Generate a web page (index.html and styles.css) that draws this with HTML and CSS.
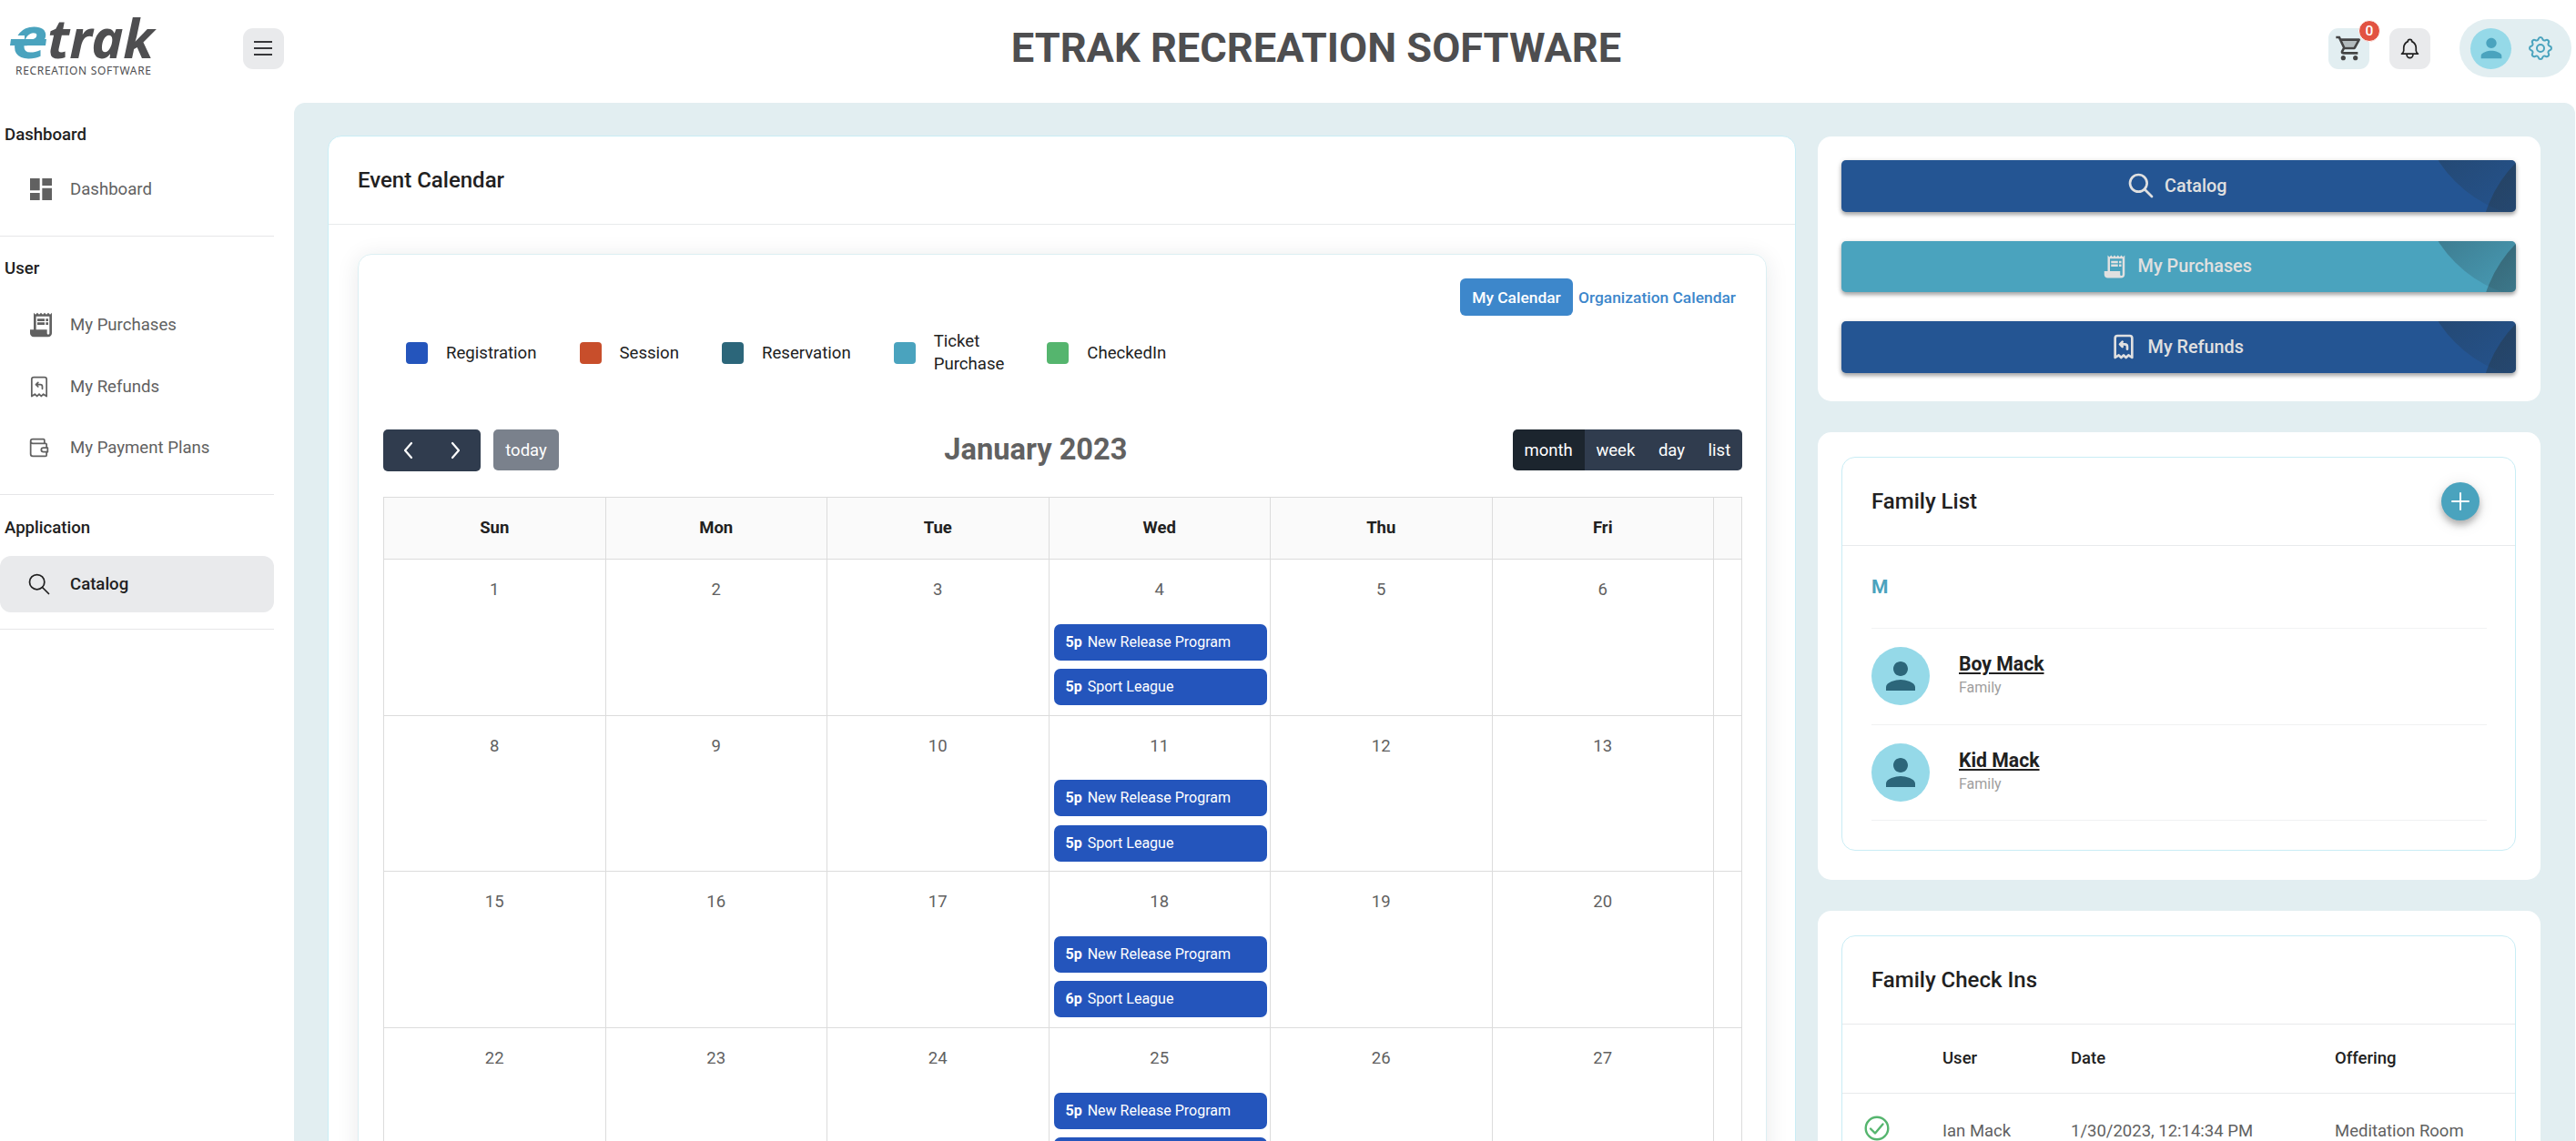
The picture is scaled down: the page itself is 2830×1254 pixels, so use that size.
FILE: index.html
```html
<!DOCTYPE html>
<html lang="en">
<head>
    <meta charset="UTF-8">
    <meta name="viewport" content="width=device-width, initial-scale=1.0">
    <title>eTrak Recreation Software</title>
    <link rel="stylesheet" href="styles.css">
</head>
<body>
    <!-- Shared icons -->
    <svg class="sprite" xmlns="http://www.w3.org/2000/svg">
        <symbol id="i-search" viewBox="0 0 24 24"><circle cx="10" cy="10" r="7"/><path d="M21 21l-6-6"/></symbol>
        <symbol id="i-receipt" viewBox="0 0 24 24"><path d="M19.5 3.5L18 2l-1.5 1.5L15 2l-1.5 1.5L12 2l-1.5 1.5L9 2 7.5 3.5 6 2v14H3v3c0 1.66 1.34 3 3 3h12c1.66 0 3-1.34 3-3V2l-1.5 1.5zM19 19c0 .55-.45 1-1 1s-1-.45-1-1v-3H8V5h11v14zM9 7h6v2H9zM16 7h2v2h-2zM9 10h6v2H9zM16 10h2v2h-2z"/></symbol>
        <symbol id="i-refund" viewBox="0 0 24 24"><path d="M5 21v-16a2 2 0 0 1 2-2h10a2 2 0 0 1 2 2v16l-3-2-2 2-2-2-2 2-2-2-3 2"/><path d="M15 14v-2a2 2 0 0 0-2-2h-4l2-2m0 4l-2-2"/></symbol>
        <symbol id="i-person" viewBox="0 0 24 24"><path d="M12 12c2.21 0 4-1.79 4-4s-1.79-4-4-4-4 1.79-4 4 1.79 4 4 4zm0 2c-2.67 0-8 1.34-8 4v2h16v-2c0-2.66-5.33-4-8-4z"/></symbol>
    </svg>

    <header class="header">
        <div class="header-left">
            <svg class="logo" width="170" height="70" viewBox="0 0 170 70">
                <text class="logo-e" x="3" y="46" textLength="39" lengthAdjust="spacingAndGlyphs">e</text>
                <path class="logo-gap" d="M0 21h17v4H0zM20 32h24v4H19z"/>
                <path class="logo-bar" d="M2 25h39l-1 7H1z"/>
                <text class="logo-trak" x="42" y="46" textLength="117" lengthAdjust="spacingAndGlyphs">trak</text>
                <text class="logo-sub" x="7" y="64" textLength="149">RECREATION SOFTWARE</text>
            </svg>
            <button class="icon-btn menu">
                <svg class="line" width="26" height="26" viewBox="0 0 26 26"><path d="M3 6h20M3 13h20M3 20h20"/></svg>
            </button>
        </div>
        <h1>ETRAK RECREATION SOFTWARE</h1>
        <div class="header-right">
            <button class="icon-btn cart">
                <svg width="32" height="32" viewBox="0 0 24 24"><path opacity=".3" d="M15.55 11l2.76-5H6.16l2.37 5z"/><path d="M15.55 13c.75 0 1.41-.41 1.75-1.03l3.58-6.49c.37-.66-.11-1.48-.87-1.48H5.21l-.94-2H1v2h2l3.6 7.59-1.35 2.44C4.52 15.37 5.48 17 7 17h12v-2H7l1.1-2h7.45zM6.16 6h12.15l-2.76 5H8.53L6.16 6zM7 18c-1.1 0-1.99.9-1.99 2S5.9 22 7 22s2-.9 2-2-.9-2-2-2zm10 0c-1.1 0-1.99.9-1.99 2s.89 2 1.99 2 2-.9 2-2-.9-2-2-2z"/></svg>
                <span class="badge">0</span>
            </button>
            <button class="icon-btn bell">
                <svg class="line" width="27" height="27" viewBox="0 0 24 24"><path d="M10 5a2 2 0 0 1 4 0a7 7 0 0 1 4 6v3a4 4 0 0 0 2 3h-16a4 4 0 0 0 2-3v-3a7 7 0 0 1 4-6M9 17v1a3 3 0 0 0 6 0v-1"/></svg>
            </button>
            <div class="profile">
                <span class="profile-avatar"><svg width="34" height="34"><use href="#i-person"/></svg></span>
                <svg class="line gear" width="32" height="32" viewBox="0 0 24 24"><path d="M10.325 4.317c.426-1.756 2.924-1.756 3.35 0a1.724 1.724 0 0 0 2.573 1.066c1.543-.94 3.31.826 2.37 2.37a1.724 1.724 0 0 0 1.065 2.572c1.756.426 1.756 2.924 0 3.35a1.724 1.724 0 0 0-1.066 2.573c.94 1.543-.826 3.31-2.37 2.37a1.724 1.724 0 0 0-2.572 1.065c-.426 1.756-2.924 1.756-3.35 0a1.724 1.724 0 0 0-2.573-1.066c-1.543.94-3.31-.826-2.37-2.37a1.724 1.724 0 0 0-1.065-2.572c-1.756-.426-1.756-2.924 0-3.35a1.724 1.724 0 0 0 1.066-2.573c-.94-1.543.826-3.31 2.37-2.37c1 .608 2.296.07 2.572-1.065z"/><circle cx="12" cy="12" r="3"/></svg>
            </div>
        </div>
    </header>

    <div class="layout">
        <nav class="sidebar">
            <div class="nav-group">
                <h2>Dashboard</h2>
                <a class="nav-item"><svg width="32" height="32" viewBox="0 0 24 24"><path d="M3 13h8V3H3v10zm0 8h8v-6H3v6zm10 0h8V11h-8v10zm0-18v6h8V3h-8z"/></svg>Dashboard</a>
            </div>
            <div class="nav-group">
                <h2>User</h2>
                <a class="nav-item"><svg width="32" height="32"><use href="#i-receipt"/></svg>My Purchases</a>
                <a class="nav-item"><svg class="line" width="28" height="28"><use href="#i-refund"/></svg>My Refunds</a>
                <a class="nav-item"><svg class="line" width="28" height="28" viewBox="0 0 24 24"><path d="M17 8v-3a1 1 0 0 0-1-1h-10a2 2 0 0 0 0 4h12a1 1 0 0 1 1 1v3m0 4v3a1 1 0 0 1-1 1h-12a2 2 0 0 1-2-2v-12"/><path d="M20 12v4h-4a2 2 0 0 1 0-4h4"/></svg>My Payment Plans</a>
            </div>
            <div class="nav-group">
                <h2>Application</h2>
                <a class="nav-item active"><svg class="line" width="28" height="28"><use href="#i-search"/></svg>Catalog</a>
            </div>
        </nav>

        <main class="main">
            <section class="card event-card">
                <h3 class="card-title">Event Calendar</h3>
                <div class="calendar-box">
                    <div class="tabs">
                        <button class="tab selected">My Calendar</button>
                        <button class="tab">Organization Calendar</button>
                    </div>
                    <ul class="legend">
                        <li><i class="registration"></i>Registration</li>
                        <li><i class="session"></i>Session</li>
                        <li><i class="reservation"></i>Reservation</li>
                        <li><i class="ticket"></i><span>Ticket<br>Purchase</span></li>
                        <li><i class="checkedin"></i>CheckedIn</li>
                    </ul>
                    <div class="toolbar">
                        <div class="toolbar-side">
                            <div class="btn-group arrows">
                                <button><svg class="line" width="12" height="20" viewBox="0 0 12 20"><path d="M10 2L3 10l7 8"/></svg></button>
                                <button><svg class="line" width="12" height="20" viewBox="0 0 12 20"><path d="M2 2l7 8-7 8"/></svg></button>
                            </div>
                            <button class="today">today</button>
                        </div>
                        <h2>January 2023</h2>
                        <div class="toolbar-side">
                            <div class="btn-group views">
                                <button class="on">month</button>
                                <button>week</button>
                                <button>day</button>
                                <button>list</button>
                            </div>
                        </div>
                    </div>
                    <div class="calendar">
                        <div class="week head">
                            <div>Sun</div><div>Mon</div><div>Tue</div><div>Wed</div><div>Thu</div><div>Fri</div><div></div>
                        </div>
                        <div class="week">
                            <div class="day">1</div>
                            <div class="day">2</div>
                            <div class="day">3</div>
                            <div class="day">4
                                <a class="event"><b>5p</b>New Release Program</a>
                                <a class="event"><b>5p</b>Sport League</a>
                            </div>
                            <div class="day">5</div>
                            <div class="day">6</div>
                            <div class="day"></div>
                        </div>
                        <div class="week">
                            <div class="day">8</div>
                            <div class="day">9</div>
                            <div class="day">10</div>
                            <div class="day">11
                                <a class="event"><b>5p</b>New Release Program</a>
                                <a class="event"><b>5p</b>Sport League</a>
                            </div>
                            <div class="day">12</div>
                            <div class="day">13</div>
                            <div class="day"></div>
                        </div>
                        <div class="week">
                            <div class="day">15</div>
                            <div class="day">16</div>
                            <div class="day">17</div>
                            <div class="day">18
                                <a class="event"><b>5p</b>New Release Program</a>
                                <a class="event"><b>6p</b>Sport League</a>
                            </div>
                            <div class="day">19</div>
                            <div class="day">20</div>
                            <div class="day"></div>
                        </div>
                        <div class="week">
                            <div class="day">22</div>
                            <div class="day">23</div>
                            <div class="day">24</div>
                            <div class="day">25
                                <a class="event"><b>5p</b>New Release Program</a>
                                <a class="event"></a>
                            </div>
                            <div class="day">26</div>
                            <div class="day">27</div>
                            <div class="day"></div>
                        </div>
                    </div>
                </div>
            </section>

            <div class="side">
                <section class="card actions">
                    <button class="action"><svg class="line" width="32" height="32"><use href="#i-search"/></svg>Catalog</button>
                    <button class="action teal"><svg width="30" height="30"><use href="#i-receipt"/></svg>My Purchases</button>
                    <button class="action"><svg class="line" width="32" height="32"><use href="#i-refund"/></svg>My Refunds</button>
                </section>

                <section class="card">
                    <div class="panel">
                        <div class="panel-head">
                            <h3>Family List</h3>
                            <button class="add"><svg class="line" width="22" height="22" viewBox="0 0 22 22"><path d="M11 2v18M2 11h18"/></svg></button>
                        </div>
                        <div class="family">
                            <div class="letter">M</div>
                            <div class="member">
                                <span class="avatar"><svg width="48" height="48"><use href="#i-person"/></svg></span>
                                <div>
                                    <a class="name">Boy Mack</a>
                                    <div class="role">Family</div>
                                </div>
                            </div>
                            <div class="member">
                                <span class="avatar"><svg width="48" height="48"><use href="#i-person"/></svg></span>
                                <div>
                                    <a class="name">Kid Mack</a>
                                    <div class="role">Family</div>
                                </div>
                            </div>
                        </div>
                    </div>
                </section>

                <section class="card">
                    <div class="panel">
                        <div class="panel-head">
                            <h3>Family Check Ins</h3>
                        </div>
                        <div class="checkin head">
                            <span></span><span>User</span><span>Date</span><span>Offering</span>
                        </div>
                        <div class="checkin">
                            <svg class="line check" width="28" height="28" viewBox="0 0 28 28"><circle cx="14" cy="14" r="12.3"/><path d="M7 14.5l5 5L20.5 9.5"/></svg>
                            <span>Ian Mack</span><span>1/30/2023, 12:14:34 PM</span><span>Meditation Room</span>
                        </div>
                    </div>
                </section>
            </div>
        </main>
    </div>
</body>
</html>
```

FILE: styles.css
```css
* {
    box-sizing: border-box;
}
body {
    margin: 0;
    height: 1254px;
    overflow: hidden;
    background: #fff;
    color: #212121;
    font-family: Roboto, "Liberation Sans", sans-serif;
    font-size: 18.5px;
}
h1, h2, h3, ul {
    margin: 0;
    padding: 0;
}
button {
    border: none;
    padding: 0;
    font-family: inherit;
    font-size: inherit;
    color: inherit;
    cursor: pointer;
}
svg {
    display: block;
    fill: currentColor;
    flex: none;
}
.line {
    fill: none;
    stroke: currentColor;
    stroke-width: 1.5;
    stroke-linecap: round;
    stroke-linejoin: round;
}
.sprite {
    display: none;
}

/* Header */
.header {
    height: 113px;
    padding: 0 5px 7px 10px;
    display: grid;
    grid-template-columns: 400px 1fr 400px;
    align-items: center;
}
.header-left {
    display: flex;
    align-items: center;
}
.logo {
    width: 170px;
    margin-right: 87px;
    overflow: visible;
}
.logo-e {
    font: italic bold 62px "Noto Sans", sans-serif;
    fill: #4aa3be;
}
.logo-bar {
    fill: #4aa3be;
}
.logo-gap {
    fill: #fff;
}
.logo-trak {
    font: italic bold 59px "Noto Sans", sans-serif;
    fill: #4e4e50;
}
.logo-sub {
    font: 12px "Noto Sans", sans-serif;
    fill: #4e4e50;
}
.icon-btn {
    width: 45px;
    height: 45px;
    border-radius: 11px;
    background: #e9eaec;
    color: #37373a;
    display: flex;
    align-items: center;
    justify-content: center;
}
.menu {
    padding-right: 1px;
}
.menu svg {
    stroke-width: 2;
    stroke-linecap: butt;
}
.header h1 {
    font-size: 45.2px;
    line-height: 54px;
    color: #4e4e50;
    text-align: center;
    margin-left: 57px;
}
.header-right {
    display: flex;
    align-items: center;
    justify-content: flex-end;
}
.cart {
    position: relative;
    background: #e2eef1;
    color: #444;
    margin-right: 22px;
}
.badge {
    position: absolute;
    top: -9px;
    right: -12px;
    width: 24px;
    height: 24px;
    border-radius: 50%;
    border: 1px solid #fff;
    background: #e25241;
    color: #fff;
    font-size: 15.5px;
    font-weight: 500;
    line-height: 22px;
}
.bell {
    color: #212121;
    margin-right: 32px;
}
.profile {
    width: 123px;
    height: 64px;
    border-radius: 32px;
    background: #e2eef1;
    display: flex;
    align-items: center;
    padding-left: 12px;
    gap: 16px;
    color: #4aa3be;
}
.profile-avatar {
    width: 45px;
    height: 45px;
    border-radius: 50%;
    background: #95d9e8;
    display: flex;
    align-items: center;
    justify-content: center;
}

/* Sidebar */
.layout {
    display: flex;
    height: 1141px;
    overflow: hidden;
    padding-right: 1px;
}
.sidebar {
    width: 323px;
    flex: none;
}
.nav-group {
    width: 301px;
    border-bottom: 1px solid #e6e6e8;
    padding: 20px 0;
}
.nav-group:first-child h2 {
    margin-bottom: 14px;
}
.nav-group:last-child {
    padding-top: 21px;
    padding-bottom: 18px;
}
.nav-group h2 {
    font-size: 18.6px;
    font-weight: 500;
    line-height: 30px;
    padding-left: 5px;
    margin-bottom: 16px;
}
.nav-item {
    display: flex;
    align-items: center;
    height: 62px;
    margin-bottom: 5.5px;
    padding-left: 29px;
    color: #616161;
    font-size: 18.6px;
}
.nav-item:last-child {
    margin-bottom: 0;
}
.nav-item svg {
    margin-right: 16px;
}
.nav-item .line {
    margin-right: 20px;
}
.nav-item.active {
    background: #e9eaec;
    border-radius: 12px;
    color: #212121;
    font-weight: 500;
    padding-bottom: 1px;
}

/* Main area */
.main {
    flex: 1;
    height: 1141px;
    background: #e2eef1;
    border-radius: 12px 12px 0 0;
    padding: 36px 38px 0 37px;
    display: flex;
    align-items: flex-start;
    gap: 24px;
}
.card {
    background: #fff;
    border-radius: 15px;
}
.event-card {
    width: 1613px;
    height: 1300px;
    border: 1px solid #c9edf5;
}
.card-title {
    height: 97px;
    padding: 0 32px;
    line-height: 96px;
    font-size: 24px;
    font-weight: 500;
    border-bottom: 1px solid #e8eaec;
}
.calendar-box {
    margin: 32px 31px 32px 32px;
    height: 1200px;
    border: 1px solid #dceff3;
    border-radius: 15px;
    padding: 26px 26px 0 27px;
    box-shadow: 0 3px 24px rgba(32, 40, 45, 0.1);
}
.tabs {
    display: flex;
    justify-content: flex-end;
    padding-right: 1px;
}
.tab {
    height: 41px;
    padding: 0 6px;
    background: none;
    color: #3d87cb;
    font-size: 17.4px;
    font-weight: 500;
}
.tab.selected {
    width: 124px;
    background: #3d87cb;
    color: #fff;
    border-radius: 6px;
}
.legend {
    list-style: none;
    display: flex;
    gap: 47px;
    height: 82px;
    padding-left: 25px;
    font-size: 18.6px;
    line-height: 25px;
}
.legend li {
    display: flex;
    align-items: center;
    gap: 20px;
}
.legend i {
    width: 24px;
    height: 24px;
    border-radius: 4px;
}
.registration { background: #2455bc; }
.session { background: #c84e2b; }
.reservation { background: #2c667a; }
.ticket { background: #4aa3be; }
.checkedin { background: #55b56e; }
.toolbar {
    display: flex;
    align-items: flex-start;
    justify-content: space-between;
    margin-top: 43px;
    margin-bottom: 28px;
    height: 46px;
}
.toolbar h2 {
    font-size: 32.6px;
    line-height: 44px;
    font-weight: 700;
    color: #616161;
}
.toolbar-side {
    display: flex;
    gap: 14px;
}
.btn-group {
    display: flex;
    border-radius: 5px;
    overflow: hidden;
}
.btn-group button {
    height: 45px;
    background: #303c4e;
    color: #fff;
    font-size: 18.5px;
    padding: 0 12.8px;
}
.btn-group button.on {
    background: #1c252e;
}
.btn-group.arrows button {
    width: 53.5px;
    height: 46px;
    padding: 0;
    display: flex;
    align-items: center;
    justify-content: center;
}
.arrows svg {
    stroke-width: 2.2;
}
.today {
    width: 72px;
    height: 45px;
    border-radius: 5px;
    background: #7a818c;
    color: #fff;
}
.calendar {
    border: 1px solid #dcdcdc;
    overflow: hidden;
}
.week {
    display: grid;
    grid-template-columns: repeat(7, 243.5px);
    height: 171.7px;
}
.week > div {
    border-right: 1px solid #dcdcdc;
    border-bottom: 1px solid #dcdcdc;
    text-align: center;
}
.week.head {
    height: 68px;
    background: #fafafa;
    font-weight: 700;
    line-height: 66px;
}
.day {
    padding: 20px 3px 0;
    line-height: 27px;
    color: #616161;
}
.event {
    display: flex;
    gap: 6px;
    height: 40px;
    margin-top: 9.5px;
    margin-left: 2px;
    padding-left: 13px;
    border-radius: 7px;
    background: #2455bc;
    color: #fff;
    font-size: 16px;
    line-height: 39px;
}
.event:first-child {
    margin-top: 23.5px;
}

/* Right column */
.side {
    width: 794px;
    flex: none;
    padding-top: 1px;
    display: flex;
    flex-direction: column;
    gap: 34px;
}
.side .card {
    padding: 27px 27px 32px 26px;
}
.side .actions {
    height: 291px;
    padding-top: 26px;
    display: flex;
    flex-direction: column;
    gap: 32px;
}
.action {
    position: relative;
    overflow: hidden;
    height: 56.5px;
    flex: none;
    border-radius: 5px;
    background: #245593;
    color: #e0e0e0;
    font-size: 19.8px;
    font-weight: 500;
    display: flex;
    align-items: center;
    justify-content: center;
    gap: 10.5px;
    box-shadow: 0 3px 4px rgba(0, 0, 0, 0.3), 0 1px 6px rgba(0, 0, 0, 0.12);
}
.action svg {
    margin-left: -5px;
    stroke-width: 2;
}
.action.teal {
    background: #4aa3be;
}
/* overlapping circles in the right corner */
.action::before,
.action::after {
    content: "";
    position: absolute;
    width: 276px;
    height: 276px;
    border-radius: 50%;
}
.action::before {
    top: -212px;
    right: -169px;
    background: linear-gradient(140deg, rgba(38, 50, 56, 0.4) 40%, rgba(38, 50, 56, 0) 75%);
}
.action::after {
    top: -38px;
    right: -236px;
    background: linear-gradient(140deg, rgba(38, 50, 56, 0.45) 0%, rgba(38, 50, 56, 0.25) 50%);
}
.panel {
    border: 1px solid #c9edf5;
    border-radius: 15px;
}
.panel-head {
    height: 97px;
    padding: 0 39px 0 32px;
    border-bottom: 1px solid #e8eaec;
    display: flex;
    align-items: center;
    justify-content: space-between;
}
.panel-head h3 {
    font-size: 24px;
    font-weight: 500;
}
.add {
    width: 42px;
    height: 42px;
    border-radius: 50%;
    background: #4aa3be;
    color: #fff;
    display: flex;
    align-items: center;
    justify-content: center;
    box-shadow: 0 5px 7px rgba(0, 0, 0, 0.25), 0 3px 18px rgba(0, 0, 0, 0.12);
}
.add svg {
    stroke-width: 2;
}
.family {
    padding: 0 31px 32px 32px;
}
.letter {
    height: 91px;
    line-height: 91px;
    border-bottom: 1px solid #f2f3f4;
    color: #4aa3be;
    font-size: 21px;
    font-weight: 700;
}
.member {
    height: 105.5px;
    border-bottom: 1px solid #f0f1f2;
    display: flex;
    align-items: center;
    gap: 32px;
}
.avatar {
    width: 64px;
    height: 64px;
    border-radius: 50%;
    background: #95d9e8;
    color: #2c667a;
    display: flex;
    align-items: center;
    justify-content: center;
}
.name {
    font-size: 21.2px;
    font-weight: 700;
    line-height: 26px;
    text-decoration: underline;
}
.role {
    font-size: 16px;
    line-height: 26px;
    color: #9e9e9e;
}
.checkin {
    display: grid;
    grid-template-columns: 86px 141px 290px 1fr;
    align-items: center;
    height: 81px;
    padding-left: 24px;
    color: #616161;
}
.checkin.head {
    height: 76px;
    padding-bottom: 2px;
    border-bottom: 1px solid #e8eaec;
    color: #212121;
    font-weight: 500;
}
.check {
    color: #55b56e;
    stroke-width: 2.4;
    margin-top: -6px;
}
```
